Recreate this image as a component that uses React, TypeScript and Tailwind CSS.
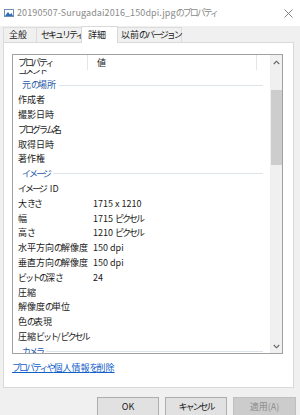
import React from 'react';

const font = { fontFamily: '"Noto Sans CJK JP", "Noto Sans", sans-serif' };

// kana are narrower in the original UI font, tighten them
function Jp({ text }: { text: string }) {
  const parts = text.split(/([\u3040-\u30ff]+)/);
  return (
    <>
      {parts.map((p, i) =>
        /[\u3040-\u30ff]/.test(p) ? (
          <span key={i} className="tracking-[-2px]">{p}</span>
        ) : (
          <React.Fragment key={i}>{p}</React.Fragment>
        )
      )}
    </>
  );
}

type Row =
  | { kind: 'group'; label: string }
  | { kind: 'row'; label: string; value?: string };

const rows: Row[] = [
  { kind: 'row', label: 'コメント' },
  { kind: 'group', label: '元の場所' },
  { kind: 'row', label: '作成者' },
  { kind: 'row', label: '撮影日時' },
  { kind: 'row', label: 'プログラム名' },
  { kind: 'row', label: '取得日時' },
  { kind: 'row', label: '著作権' },
  { kind: 'group', label: 'イメージ' },
  { kind: 'row', label: 'イメージ\u00a0 ID' },
  { kind: 'row', label: '大きさ', value: '1715 x 1210' },
  { kind: 'row', label: '幅', value: '1715 ピクセル' },
  { kind: 'row', label: '高さ', value: '1210 ピクセル' },
  { kind: 'row', label: '水平方向の解像度', value: '150 dpi' },
  { kind: 'row', label: '垂直方向の解像度', value: '150 dpi' },
  { kind: 'row', label: 'ビットの深さ', value: '24' },
  { kind: 'row', label: '圧縮' },
  { kind: 'row', label: '解像度の単位' },
  { kind: 'row', label: '色の表現' },
  { kind: 'row', label: '圧縮ビット/ピクセル' },
  { kind: 'group', label: 'カメラ' },
];

function FileIcon() {
  return (
    <svg width="10" height="10" viewBox="0 0 10 10">
      <rect x="0.5" y="1.5" width="9" height="7" fill="#ffffff" stroke="#6f8fb8" />
      <path d="M1 8 L4 4 L6 6.5 L7.5 5 L9 8 Z" fill="#2e6db4" />
    </svg>
  );
}

export default function App() {
  return (
    <div className="w-[300px] h-[415px] bg-[#f0f0f0] overflow-hidden text-[9px] text-[#1a1a1a]" style={font}>
      {/* title bar */}
      <div className="h-[26px] bg-white flex items-center pl-[4px] pr-[6px]">
        <FileIcon />
        <span className="ml-[3px] text-[#8a8a8a] flex-1 whitespace-nowrap tracking-[0.1px]">
          <Jp text="20190507-Surugadai2016_150dpi.jpgのプロパティ" />
        </span>
        <svg width="9" height="9" viewBox="0 0 9 9" className="mr-[1px]">
          <path d="M0.5 0.5 L8.5 8.5 M8.5 0.5 L0.5 8.5" stroke="#777" strokeWidth="0.9" />
        </svg>
      </div>

      {/* tabs */}
      <div className="h-[16px] flex items-end pl-[3px] relative z-10 whitespace-nowrap">
        <div className="w-[34px] h-[15px] pl-[5px] flex items-center border border-b-0 border-[#dcdcdc]">全般</div>
        <div className="w-[46px] h-[15px] pl-[4px] flex items-center border border-l-0 border-b-0 border-[#dcdcdc]"><Jp text="セキュリティ" /></div>
        <div className="w-[37px] h-[17px] pl-[6px] mb-[-1px] flex items-center bg-white border border-b-0 border-[#d9d9d9] -ml-[2px]">詳細</div>
        <div className="w-[64px] h-[15px] pl-[3px] flex items-center border border-l-0 border-b-0 border-[#dcdcdc]"><Jp text="以前のバージョン" /></div>
      </div>

      {/* tab panel */}
      <div className="ml-[3px] w-[291px] h-[346px] bg-white border border-[#d9d9d9] pt-[11px] pl-[8px]">
        <div className="w-[271px] h-[300px] border border-[#a0a0a0] flex">
          <div className="flex-1 flex flex-col overflow-hidden">
            {/* header */}
            <div className="h-[15px] flex items-center shrink-0 bg-white relative z-10">
              <div className="w-[75px] h-full pl-[5px] flex items-center border-r border-[#e5e5e5]"><Jp text="プロパティ" /></div>
              <div className="w-[169px] h-full pl-[9px] flex items-center border-r border-[#e5e5e5]">値</div>
            </div>
            <div className="flex-1 overflow-hidden">
              <div className="-mt-[7px]">
                {rows.map((r, i) =>
                  r.kind === 'group' ? (
                    <div key={i} className="h-[14.8px] flex items-center pl-[9px] pr-[7px]">
                      <span className="text-[#2a5aa8] mr-[3px]"><Jp text={r.label} /></span>
                      <div className="flex-1 h-px bg-[#dde3ec]" />
                    </div>
                  ) : (
                    <div key={i} className="h-[14.8px] flex items-center">
                      <span className="w-[80px] pl-[5px] whitespace-nowrap"><Jp text={r.label} /></span>
                      <span>{r.value && <Jp text={r.value} />}</span>
                    </div>
                  )
                )}
              </div>
            </div>
          </div>
          {/* scrollbar */}
          <div className="w-[12px] bg-[#f0f0f0] flex flex-col items-center">
            <div className="h-[14px] flex items-center justify-center">
              <svg width="7" height="5" viewBox="0 0 7 5">
                <path d="M0.8 4 L3.5 1.2 L6.2 4" fill="none" stroke="#606060" strokeWidth="1.1" />
              </svg>
            </div>
            <div className="mt-[21px] w-[11px] h-[75px] bg-[#cdcdcd]" />
            <div className="flex-1" />
            <div className="h-[14px] flex items-center justify-center">
              <svg width="7" height="5" viewBox="0 0 7 5">
                <path d="M0.8 1 L3.5 3.8 L6.2 1" fill="none" stroke="#606060" strokeWidth="1.1" />
              </svg>
            </div>
          </div>
        </div>
        <div className="mt-[7px] text-[#1060c8] underline"><Jp text="プロパティや個人情報を削除" /></div>
      </div>

      {/* buttons */}
      <div className="flex justify-end gap-[6px] pr-[4px] mt-[9px]">
        <button className="w-[62px] h-[20px] bg-[#e1e1e1] border border-[#adadad]">OK</button>
        <button className="w-[62px] h-[20px] bg-[#e1e1e1] border border-[#adadad]"><Jp text="キャンセル" /></button>
        <button className="w-[63px] h-[20px] bg-[#cccccc] border border-[#bfbfbf] text-[#8c8c8c]">適用(A)</button>
      </div>
    </div>
  );
}
